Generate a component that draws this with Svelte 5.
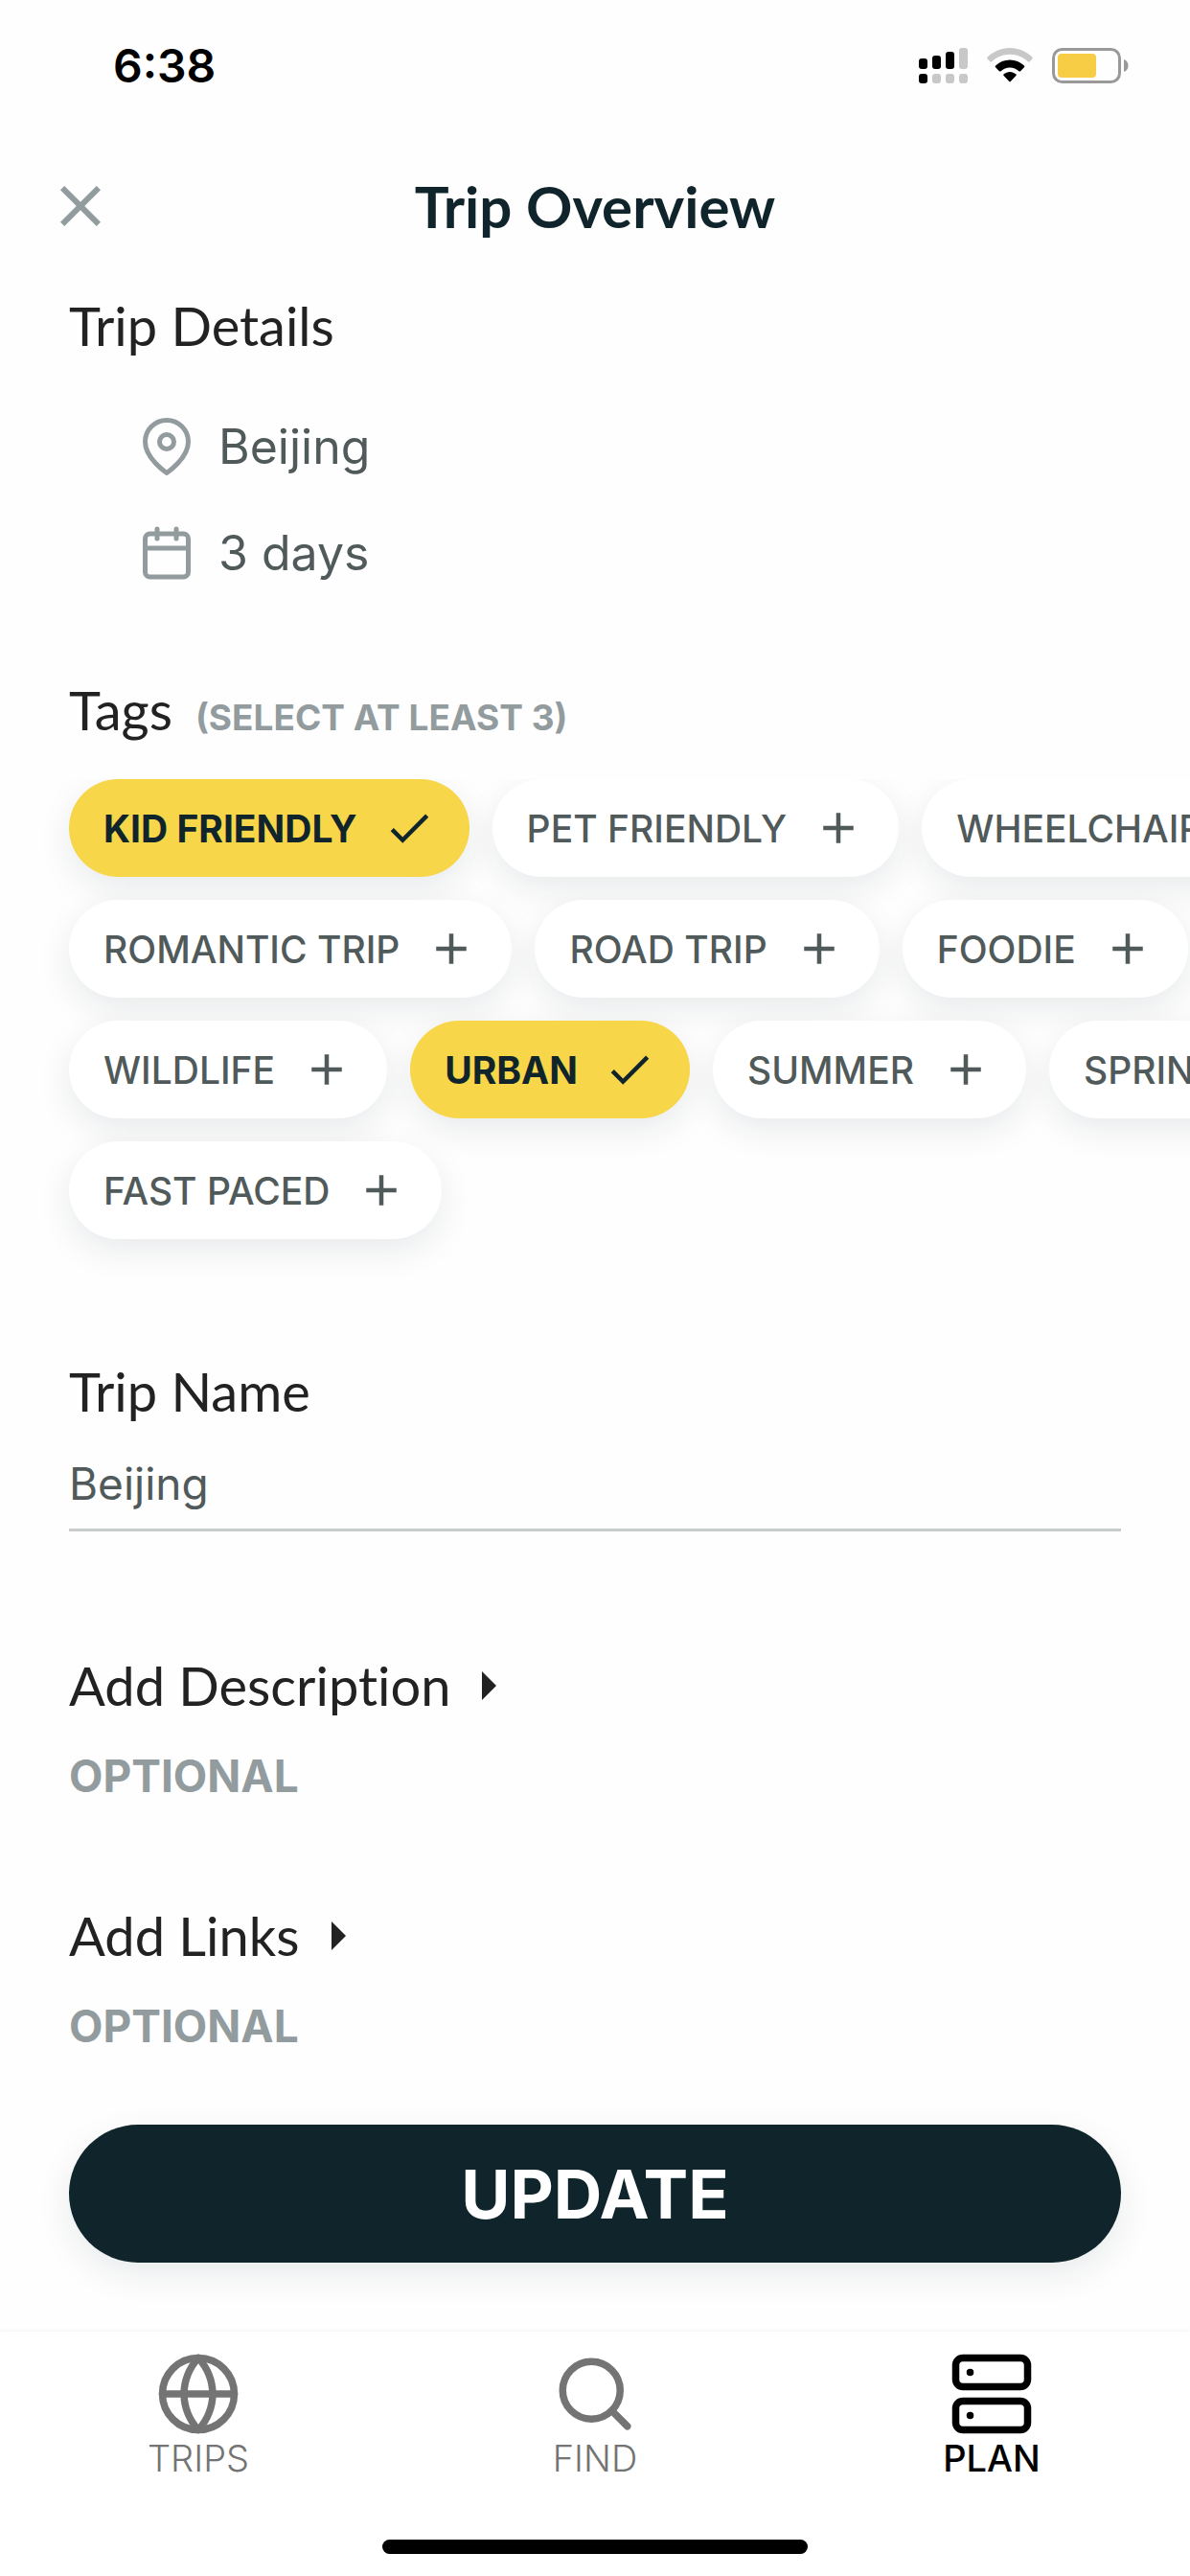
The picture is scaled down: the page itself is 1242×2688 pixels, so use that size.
<script lang="ts">
	interface Tag {
		label: string;
		selected: boolean;
	}

	let tagRows: Tag[][] = $state([
		[
			{ label: 'KID FRIENDLY', selected: true },
			{ label: 'PET FRIENDLY', selected: false },
			{ label: 'WHEELCHAIR', selected: false }
		],
		[
			{ label: 'ROMANTIC TRIP', selected: false },
			{ label: 'ROAD TRIP', selected: false },
			{ label: 'FOODIE', selected: false }
		],
		[
			{ label: 'WILDLIFE', selected: false },
			{ label: 'URBAN', selected: true },
			{ label: 'SUMMER', selected: false },
			{ label: 'SPRING', selected: false }
		],
		[{ label: 'FAST PACED', selected: false }]
	]);

	let tripName = $state('Beijing');
	let activeTab = $state('PLAN');

	const extras = ['Add Description', 'Add Links'];
	const tabs = ['TRIPS', 'FIND', 'PLAN'];
</script>

<div class="screen">
	<div class="status-bar">
		<span class="time">6:38</span>
		<div class="status-icons">
			<svg class="signal" viewBox="0 0 51 37">
				<rect x="0" y="11" width="9" height="11" rx="3" />
				<rect x="14" y="8" width="9" height="14" rx="3" />
				<rect x="28" y="4" width="9" height="18" rx="3" />
				<rect class="dim" x="42" y="0" width="9" height="22" rx="3" />
				<rect x="0" y="27" width="9" height="10" rx="3" />
				<rect class="dim" x="14" y="27" width="9" height="10" rx="3" />
				<rect class="dim" x="28" y="27" width="9" height="10" rx="3" />
				<rect class="dim" x="42" y="27" width="9" height="10" rx="3" />
			</svg>
			<svg class="wifi" viewBox="0 0 48 37">
				<path class="dim" d="M24 0c9 0 17 3.600 23.300 9.400.6.6.6 1.400.1 2l-2.700 2.800c-.6.6-1.300.6-1.900 0C37.700 9.500 31.200 6.800 24 6.800S10.300 9.500 5.200 14.200c-.6.6-1.300.6-1.900 0L.6 11.400c-.5-.6-.5-1.400.1-2C7 3.600 15 0 24 0z" />
				<path d="M24 12.500c5.700 0 10.900 2.200 14.900 5.900.6.500.6 1.300 0 1.900l-3.800 3.900c-.5.5-1.200.5-1.700 0-2.500-2.300-5.800-3.700-9.400-3.700s-6.900 1.400-9.400 3.700c-.5.5-1.200.5-1.700 0l-3.800-3.900c-.6-.6-.6-1.400 0-1.900 4-3.700 9.200-5.900 14.900-5.900z" />
				<path d="M24 24.900c2.400 0 4.600.9 6.300 2.400.6.500.6 1.300.1 1.800l-5.700 6c-.4.4-1 .4-1.400 0l-5.700-6c-.5-.5-.5-1.300.1-1.800 1.700-1.500 3.900-2.400 6.300-2.400z" />
			</svg>
			<svg class="battery" viewBox="0 0 80 37">
				<rect x="1.500" y="1.500" width="69" height="34" rx="9" fill="none" stroke="#999" stroke-width="3" />
				<rect x="6" y="6" width="40" height="25" rx="4" fill="#f7cd46" />
				<path d="M75 12c3 1 4.500 3.500 4.500 6.500S78 24 75 25z" fill="#999" />
			</svg>
		</div>
	</div>

	<header class="header">
		<button type="button" class="close" aria-label="Close">
			<svg viewBox="0 0 24 24" fill="currentColor">
				<path d="M19 6.410L17.590 5 12 10.590 6.410 5 5 6.410 10.590 12 5 17.590 6.410 19 12 13.410 17.590 19 19 17.590 13.410 12z" />
			</svg>
		</button>
		<h1>Trip Overview</h1>
	</header>

	<main>
		<section class="details">
			<h2 class="title">Trip Details</h2>
			<ul>
				<li>
					<svg class="line-icon" viewBox="0 0 24 24">
						<path d="M21 10c0 7-9 13-9 13s-9-6-9-13a9 9 0 0 1 18 0z" />
						<circle cx="12" cy="10" r="3" />
					</svg>
					Beijing
				</li>
				<li>
					<svg class="line-icon" viewBox="0 0 24 24">
						<rect x="3" y="4" width="18" height="18" rx="2" />
						<path d="M16 2v4M8 2v4M3 10h18" />
					</svg>
					3 days
				</li>
			</ul>
		</section>

		<section class="tags">
			<div class="tags-heading">
				<h2 class="title">Tags</h2>
				<span class="hint">(SELECT AT LEAST 3)</span>
			</div>
			<div class="tags-scroller">
				{#each tagRows as row}
					<div class="tag-row">
						{#each row as tag}
							<button
								type="button"
								class="tag"
								class:selected={tag.selected}
								aria-pressed={tag.selected}
								onclick={() => tag.selected = !tag.selected}
							>
								{tag.label}
								<svg viewBox="0 0 24 24" fill="currentColor">
									{#if tag.selected}
										<path d="M9 16.170L4.830 12l-1.420 1.410L9 19 21 7l-1.410-1.410z" />
									{:else}
										<path d="M19 13h-6v6h-2v-6H5v-2h6V5h2v6h6v2z" />
									{/if}
								</svg>
							</button>
						{/each}
					</div>
				{/each}
			</div>
		</section>

		<section class="name">
			<label class="title" for="trip-name">Trip Name</label>
			<input id="trip-name" type="text" bind:value={tripName} />
		</section>

		{#each extras as extra}
			<section class="extra">
				<button type="button" class="title expand">
					{extra}
					<svg viewBox="0 0 15 30" fill="currentColor">
						<path d="M0 0l15 15L0 30z" />
					</svg>
				</button>
				<p class="optional">OPTIONAL</p>
			</section>
		{/each}

		<button type="button" class="update">UPDATE</button>
	</main>

	<nav class="tab-bar">
		<div class="tabs">
			{#each tabs as tab}
				<button
					type="button"
					class="tab"
					class:active={tab === activeTab}
					onclick={() => activeTab = tab}
				>
					<svg class="line-icon" viewBox="0 0 24 24">
						{#if tab === 'TRIPS'}
							<circle cx="12" cy="12" r="10" />
							<path d="M2 12h20M12 2a15.300 15.300 0 0 1 4 10 15.300 15.300 0 0 1-4 10 15.300 15.300 0 0 1-4-10 15.300 15.300 0 0 1 4-10z" />
						{:else if tab === 'FIND'}
							<circle cx="11" cy="11" r="8" />
							<path d="M21 21l-4.350-4.350" />
						{:else}
							<rect x="2" y="2" width="20" height="8" rx="2" />
							<rect x="2" y="14" width="20" height="8" rx="2" />
							<path d="M6 6h.01M6 18h.01" />
						{/if}
					</svg>
					{tab}
				</button>
			{/each}
		</div>
		<div class="home-indicator"></div>
	</nav>
</div>

<style>
	:global(body) {
		background: #fefefe;
	}

	.screen {
		display: flex;
		flex-direction: column;
		min-height: 100vh;
		overflow: hidden;
		font-family: Inter, 'Liberation Sans', sans-serif;
		color: #515a5a;
	}

	button {
		padding: 0;
		background: none;
		border: none;
		font-family: inherit;
		cursor: pointer;
	}

	svg {
		display: block;
		flex-shrink: 0;
	}

	.status-bar {
		display: flex;
		align-items: center;
		justify-content: space-between;
		height: 136px;
		padding: 0 64px 0 118px;
		color: #000;
	}

	.time {
		font-size: 48px;
		font-weight: 600;
	}

	.status-icons {
		display: flex;
		gap: 20px;
	}

	.status-icons svg {
		height: 37px;
	}

	.signal {
		width: 51px;
	}

	.wifi {
		width: 48px;
	}

	.battery {
		width: 80px;
	}

	.dim {
		fill: #c8c8c8;
	}

	.header {
		display: grid;
		grid-template-columns: 72px 1fr 72px;
		align-items: center;
		height: 158px;
		padding: 0 48px;
	}

	.close {
		color: #929b9e;
	}

	.close svg {
		width: 72px;
		height: 72px;
	}

	h1 {
		margin: 0;
		font-family: Lato, sans-serif;
		font-size: 60px;
		font-weight: 700;
		line-height: 72px;
		text-align: center;
		color: #10252b;
	}

	main {
		display: flex;
		flex: 1;
		flex-direction: column;
		padding: 10px 72px 72px;
	}

	.title {
		display: block;
		margin: 0;
		font-family: Lato, sans-serif;
		font-size: 56px;
		font-weight: 400;
		font-variant-ligatures: none;
		line-height: 72px;
		color: #222;
	}

	.line-icon {
		fill: none;
		stroke: currentColor;
		stroke-width: 2;
		stroke-linecap: round;
		stroke-linejoin: round;
	}

	.details ul {
		display: flex;
		flex-direction: column;
		gap: 51px;
		margin: 60px 0 0;
		padding: 0 0 0 72px;
		list-style: none;
	}

	.details li {
		display: flex;
		align-items: center;
		gap: 24px;
		font-size: 50px;
		line-height: 60px;
	}

	.details .line-icon {
		width: 60px;
		height: 60px;
		color: #929b9e;
	}

	.tags {
		margin-top: 98px;
	}

	.tags-heading {
		display: flex;
		align-items: baseline;
		gap: 24px;
	}

	.hint {
		font-size: 37px;
		font-weight: 700;
		color: #929b9e;
	}

	.tags-scroller {
		display: flex;
		flex-direction: column;
		gap: 24px;
		margin: 36px -72px 0;
		padding: 0 72px 48px;
		overflow-x: auto;
		overflow-y: hidden;
		scrollbar-width: none;
	}

	.tag-row {
		display: flex;
		gap: 24px;
	}

	.tag {
		display: flex;
		flex-shrink: 0;
		align-items: center;
		gap: 27px;
		height: 102px;
		padding: 0 36px;
		border-radius: 51px;
		background: #fff;
		box-shadow: 0 12px 36px rgba(16, 37, 43, 0.09);
		font-size: 39px;
		font-weight: 500;
		color: #515a5a;
		white-space: nowrap;
	}

	.tag.selected {
		background: #f7d64a;
		font-weight: 700;
		color: #10252b;
	}

	.tag svg {
		width: 54px;
		height: 54px;
	}

	.name {
		display: flex;
		flex-direction: column;
		gap: 12px;
		margin-top: 75px;
		margin-bottom: 125px;
	}

	input {
		box-sizing: border-box;
		width: 100%;
		height: 98px;
		padding: 0;
		background: none;
		border: none;
		border-bottom: 3px solid #c8cccc;
		outline: none;
		font-family: inherit;
		font-size: 46px;
		color: #515a5a;
	}

	.extra {
		margin-bottom: 101px;
	}

	.extra + .update {
		margin-top: -28px;
	}

	.expand {
		display: flex;
		align-items: center;
		gap: 33px;
	}

	.expand svg {
		width: 15px;
		height: 30px;
	}

	.optional {
		margin: 28px 0 0;
		font-size: 46px;
		font-weight: 700;
		line-height: 60px;
		color: #929b9e;
	}

	.update {
		height: 144px;
		border-radius: 72px;
		background: #10252b;
		box-shadow: 0 12px 36px rgba(16, 37, 43, 0.09);
		font-size: 70px;
		font-weight: 700;
		color: #fff;
	}

	.tab-bar {
		padding: 20px 0 24px;
		background: #fff;
		box-shadow: 0 -2px 4px rgba(0, 0, 0, 0.03);
	}

	.tabs {
		display: grid;
		grid-template-columns: repeat(3, 1fr);
		height: 197px;
	}

	.tab {
		display: flex;
		flex-direction: column;
		align-items: center;
		gap: 4px;
		font-size: 38px;
		font-weight: 300;
		line-height: 36px;
		color: #747474;
	}

	.tab.active {
		font-weight: 500;
		color: #000;
	}

	.tab .line-icon {
		width: 90px;
		height: 90px;
	}

	.home-indicator {
		width: 444px;
		height: 15px;
		margin: 0 auto;
		border-radius: 8px;
		background: #000;
	}
</style>
